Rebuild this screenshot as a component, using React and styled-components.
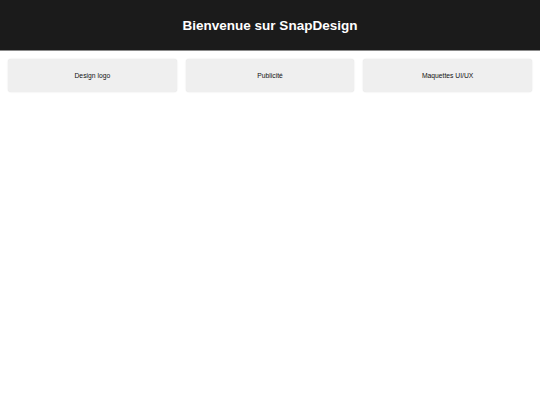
import styled, { createGlobalStyle } from 'styled-components';

const GlobalStyle = createGlobalStyle`
	body {
		margin: 0;
		background: #fff;
		font-family: "Liberation Sans", Arial, sans-serif;
	}
`;

const Header = styled.header`
	height: 50px;
	background: #1b1b1b;
	border-bottom: 1px solid #8a8a8a;
	display: flex;
	align-items: center;
	justify-content: center;
	color: #fff;
	h1 {
		margin: 0;
		font-size: 13.5px;
		font-weight: bold;
	}
`;

const Services = styled.section`
	display: flex;
	gap: 9px;
	padding: 8px 8px;
`;

const ServiceCard = styled.div`
	flex: 1;
	height: 33px;
	display: flex;
	align-items: center;
	justify-content: center;
	background: #efefef;
	border-radius: 3px;
	box-shadow: 0 0 1.5px rgba(0, 0, 0, 0.15);
	font-size: 6.75px;
	color: #111;
`;

const services = ['Design logo', 'Publicité', 'Maquettes UI/UX'];

export default function App() {
	return (
		<>
			<GlobalStyle />
			<Header>
				<h1>Bienvenue sur SnapDesign</h1>
			</Header>
			<Services>
				{services.map((name) => (
					<ServiceCard key={name}>{name}</ServiceCard>
				))}
			</Services>
		</>
	);
}
